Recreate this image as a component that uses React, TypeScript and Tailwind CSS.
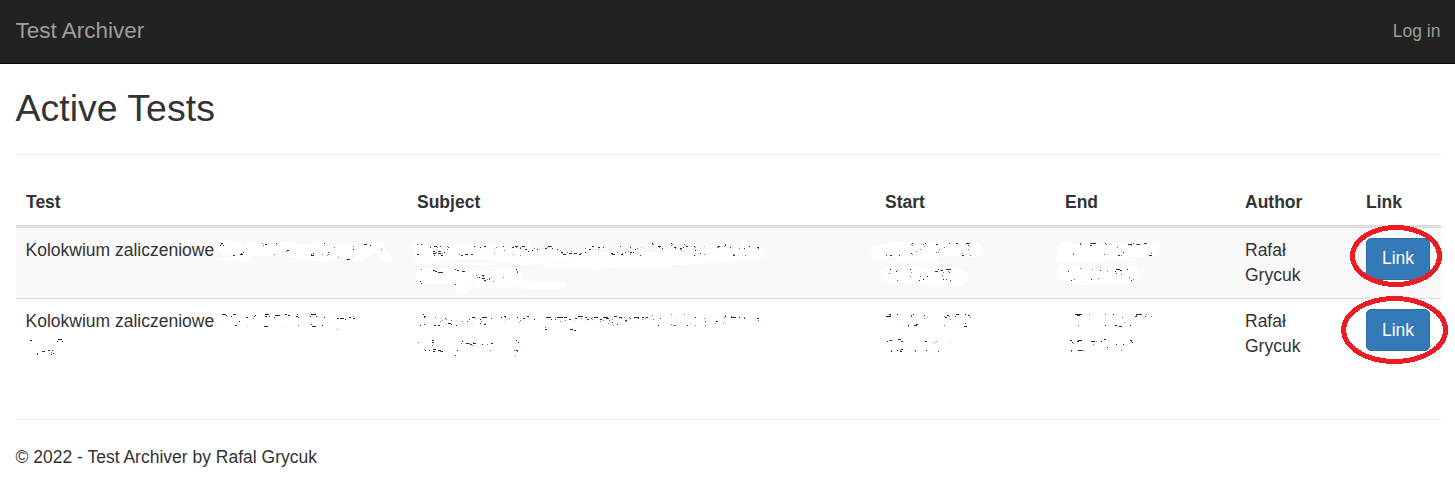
import React from "react";

type Tone = "dark" | "blue" | "amber" | "sky";

const toneClass: Record<Tone, string> = {
  dark: "stroke-[#2b2b30]",
  blue: "stroke-[#3f86bd]",
  amber: "stroke-[#b9752f]",
  sky: "stroke-[#a9daf7]",
};

// Each entry is "x,y,width": the ink left of the rubbed-out words.
const specks: Record<Tone, string> = {
  dark: `
220,245,1 221,243,2 223,245,1 233,255,2 240,254,3 243,252,1 241,253,1 265,244,2 276,243,1 287,250,2 311,254,1 311,255,3 313,253,1 324,243,1 328,252,1 347,259,3 353,249,1 364,244,3 370,245,1
222,314,4 226,315,1 231,316,1 233,314,3 235,325,2 239,321,1 246,317,2 255,315,1 254,316,1 265,314,4 269,316,1 265,316,2 264,326,4 275,315,5 274,317,1 285,314,2 288,315,2 296,316,2 297,314,1 311,314,5 310,316,1 316,316,1 311,324,1 312,326,4 322,325,1 324,317,1 337,318,2 340,318,4 345,319,1 349,317,2 353,318,2
30,340,2 57,341,1 58,339,4 62,341,1 37,353,1 42,351,3 48,350,2 52,350,1 53,353,1 51,354,1
417,254,2 421,244,1 430,247,1 434,246,3 440,246,1 448,247,1 433,251,2 438,251,2 433,253,3 438,253,3 434,255,1 441,255,2 444,252,1 461,255,2 465,254,3 471,254,2 474,246,1 480,247,1 484,246,2 503,246,1 512,247,2 515,246,3 520,248,1 522,246,3 525,249,2 528,251,1 532,250,1 537,249,1 545,248,2 548,246,3 552,248,1 557,249,1 561,252,2 563,254,3 569,253,3 574,253,3 579,254,2 585,252,1 589,249,2 592,246,2 598,247,2 603,247,1 611,253,2 621,254,2 625,252,1 630,252,2 635,249,1
433,270,2 435,271,2 438,272,5 455,269,1 457,270,2 462,271,3 420,281,1 421,283,1 455,284,1 482,275,2 479,277,1 482,278,3 484,280,2 489,278,1 516,269,1 517,272,1
612,254,3 620,246,1 630,247,1 633,252,1 640,255,1 652,243,1 658,246,3 662,248,1 671,243,1 674,247,2 680,248,2 683,247,1 686,246,2 694,246,1 695,250,1 694,255,1 700,253,1 718,246,2 725,245,1 730,247,1 733,255,2 744,248,1 749,246,1 757,247,2
886,255,1 890,255,2 899,255,1 912,243,1 911,253,1 925,243,1 936,244,2 949,243,1 956,243,2 966,243,4 968,245,1 962,255,2
890,269,1 896,271,1 910,269,1 919,280,1 923,279,1 927,276,1 935,271,3 938,269,1 941,270,2 946,269,5 949,272,1 943,279,1 950,280,1
1080,244,1 1091,243,5 1090,245,2 1105,243,1 1118,255,2 1123,252,1 1128,244,4 1133,243,1 1137,244,3 1144,243,3 1149,255,3
1068,271,1 1071,280,1 1091,279,1 1100,270,1 1115,271,1 1116,269,4 1120,270,2 1116,273,1 1127,269,1 1131,280,1
423,314,1 424,316,2 424,317,1 420,325,1 424,324,1 434,325,2 438,325,2 445,318,1 448,323,3 451,324,1 456,325,1 467,321,1 469,319,1 472,317,3 482,317,5 480,319,1 480,323,1 484,324,2 491,318,1 501,317,1 504,316,2 517,317,1 523,318,2 527,316,2 534,319,1 546,317,5 551,319,1 555,319,1 557,317,6 564,317,3 569,319,2 575,318,2 578,316,5 585,317,2 587,319,2 591,318,1 594,317,4 600,319,2 605,317,3 608,318,1 545,329,2 570,329,3 574,330,2
432,340,2 432,342,2 433,349,3 433,351,2 438,350,3 441,351,2 429,350,1 425,350,1 457,350,1 455,355,1 462,341,1 466,343,3 470,344,2 473,343,3 482,344,1 491,343,2 516,340,1 518,342,1 516,350,2
603,317,2 606,318,2 614,316,3 619,317,3 612,322,1 617,324,1 625,320,2 630,318,1 634,317,5 638,318,1 642,317,2 646,317,2 660,318,1 658,325,1 674,325,1 687,325,1 695,317,1 705,321,1 716,321,2 725,316,1 731,317,5 739,317,1 744,318,1 757,318,2
886,316,3 889,314,2 889,316,2 897,314,1 911,316,1 913,314,1 924,315,1 914,325,3 916,324,2 908,325,1 945,317,2 947,315,2 956,314,3 955,316,1 965,314,1 968,315,2 965,323,1 964,326,3
887,341,1 890,340,2 898,339,3 901,341,2 925,341,2 891,351,1 897,350,1 900,351,2 901,349,2 915,350,1 926,350,1 938,351,1
1075,314,7 1077,315,3 1105,325,1 1115,325,2 1119,326,3 1130,325,1 1136,314,6 1135,316,2 1145,316,1 1113,314,1
1070,340,2 1072,342,1 1078,340,4 1077,341,2 1091,341,4 1101,341,1 1104,339,2 1116,344,1 1123,344,1 1130,340,2 1132,342,1 1107,347,1 1078,350,4 1071,350,1`,
  blue: `
263,245,1 286,251,1 322,254,1 328,254,1 338,257,1 353,246,1 298,317,1 298,325,1 253,318,1 37,354,1 51,352,1
447,249,1 436,252,1 440,251,1 459,254,1 496,247,1 504,250,1 516,247,1 534,248,1 551,246,1 560,250,1 567,252,1 580,253,1 617,252,1 630,254,1 637,248,1 421,269,1 477,277,1 487,279,1 489,279,1 517,271,1
653,244,1 671,245,1 675,248,1 684,244,1 681,250,1 695,247,1 717,247,1 724,246,1 733,254,1 758,248,1
912,245,1 916,251,1 923,244,1 936,252,1 939,249,1 944,247,1 970,255,1 889,273,1 897,280,1 910,276,1 942,275,1 946,279,1
1073,253,1 1090,243,1 1104,254,1 1117,247,1 1131,245,1 1151,253,1 1080,268,1 1098,278,1 1121,274,1 1129,277,1
435,317,1 442,320,1 451,320,1 481,321,1 505,317,1 520,320,1 545,327,1 565,320,1 592,319,1 609,320,1 424,349,1 432,345,1 461,343,1 472,345,1 517,351,1 487,344,1
612,319,1 624,317,1 626,320,1 645,318,1 653,319,1 671,324,1 695,325,1 715,323,1 724,317,1 731,316,1 744,317,1 758,320,1
908,326,1 890,315,1 944,325,1 949,316,1 970,317,1 891,350,1 897,350,1 915,351,1 1105,314,1 1078,325,1 1122,317,1 1151,316,1 1071,351,1 1096,341,1 1131,341,1 1083,350,1`,
  amber: `
221,244,1 262,243,1 274,254,1 327,255,1 334,247,1 381,249,1 337,329,1 353,316,1
417,244,1 437,247,1 442,253,1 447,246,1 467,254,1 480,247,1 494,253,1 513,254,1 520,247,1 520,255,1 547,247,1 562,253,1 571,251,1 581,253,1 585,248,1 598,249,1 613,254,1 622,253,1 628,251,1 476,275,1 483,276,1 493,281,1 503,277,1
652,244,1 659,247,1 672,244,1 680,249,1 685,245,1 704,254,1 718,247,1 725,244,1 739,248,1 745,255,1
911,244,1 920,249,1 924,246,1 912,254,1 938,252,1 944,247,1 968,249,1 962,253,1 897,270,1 911,272,1 920,276,1 943,272,1 948,271,1
1073,254,1 1080,243,1 1106,244,1 1121,255,1 1136,244,1 1074,279,1 1092,269,1 1107,271,1 1116,273,1 1133,279,1
440,321,1 446,319,1 449,323,1 462,321,1 475,318,1 485,323,1 509,318,1 519,322,1 524,318,1 555,317,1 560,321,1 581,318,1 592,317,1 600,321,1 418,342,1 440,351,1 469,343,1 473,342,1 482,344,1 490,350,1 514,350,1 515,355,1
603,320,1 608,323,1 613,325,1 621,318,1 626,321,1 629,317,1 642,319,1 652,315,1 671,314,1 675,325,1 684,314,1 704,318,1 705,325,1 723,323,1 725,315,1 739,317,1
887,316,1 890,316,1 911,315,1 924,318,1 944,316,1 950,319,1 889,340,1 900,350,1 936,341,1 934,342,1 1089,314,1 1124,322,1 1130,325,1 1136,315,1 1146,314,1 1073,343,1 1093,344,1 1121,350,1`,
  sky: `
247,325,1 282,326,1 352,256,1 436,249,1 441,251,1 459,254,1 499,254,1 530,246,1 562,252,1 573,254,1 592,249,1 641,247,1 676,247,1 704,246,1 742,254,1 485,281,1 478,274,1 491,277,1 456,320,1 472,324,1 504,321,1 520,321,1 562,321,1 574,320,1 585,322,1 610,318,1 676,317,1 690,323,1 725,322,1 899,250,1 940,269,1 1123,246,1 1107,254,1 927,317,1 950,341,1 1133,318,1 1108,341,1 1082,350,1 440,346,1 487,350,1`,
};

const toPath = (runs: string) =>
  runs
    .trim()
    .split(/\s+/)
    .map((run) => {
      const [x, y, w] = run.split(",").map(Number);
      return `M${x} ${y + 0.5}h${w}`;
    })
    .join("");

const tones: Tone[] = ["sky", "amber", "blue", "dark"];

function RubbedText() {
  return (
    <g fill="none">
      <g stroke="#fff" strokeLinecap="round" strokeLinejoin="round">
        <path strokeWidth="14" d="M225 247l12 3l7 5l7-6h35l12 2l14 1M313 250l7-3l10 5h18l10 2l5-2M421 246l1 12l15-5l50-1l40 6l30-3l50 5l70-2l53-3M880 252l20-3l30 1l30-1l16 1M900 254h33M1064 249l20 4l30-2l39-2" />
        <path strokeWidth="9" d="M318 244l5 14M344 253l15 4M360 250l20-3l3 8l5 3M527 245l-1 5M594 265v1M500 257h60M720 253h40M875 254h10M1061 258h40" />
        <path strokeWidth="15" d="M422 276l30 0l30 3l32-3M463 283v4M888 274l27 0l35 4l11 0M1064 273l35 3l33-2" />
        <path strokeWidth="7" d="M480 285l35-3l18 3h29M745 243v8" />
        <path strokeWidth="2" strokeDasharray="0 3" d="M425 263l35 1l35 0M540 263l60 5l60-3l45-3M542 266l60 -1l45 0M890 262h50M930 286h20M500 288h60M1075 284h45M220 259h20M310 260h40" />
      </g>
      <g shapeRendering="crispEdges" strokeWidth="1">
        {tones.map((tone) => (
          <path key={tone} className={toneClass[tone]} d={toPath(specks[tone])} />
        ))}
      </g>
    </g>
  );
}

function Markup() {
  return (
    <svg
      className="pointer-events-none absolute left-0 top-0"
      width="1455"
      height="490"
      viewBox="0 0 1455 490"
      aria-hidden="true"
    >
      <RubbedText />
      <g fill="none" stroke="#ed1c24" strokeWidth="5" shapeRendering="crispEdges">
        <ellipse cx="1396" cy="256" rx="43.5" ry="28.5" />
        <ellipse cx="1394.6" cy="330" rx="51" ry="31.5" />
      </g>
    </svg>
  );
}

const columns = [
  { label: "Test", width: "w-[391px]" },
  { label: "Subject", width: "w-[468px]" },
  { label: "Start", width: "w-[180px]" },
  { label: "End", width: "w-[180px]" },
  { label: "Author", width: "w-[121px]" },
  { label: "Link", width: "w-[85px]" },
];

type TestRowProps = { rowClass: string; textClass: string; linkClass: string; buttonClass: string };

function TestRow({ rowClass, textClass, linkClass, buttonClass }: TestRowProps) {
  return (
    <tr className={`align-top ${rowClass}`}>
      <td className={`pl-[9.5px] ${textClass}`}>Kolokwium zaliczeniowe</td>
      <td />
      <td />
      <td />
      <td className={`px-2.5 ${textClass}`}>
        Rafał
        <br />
        Grycuk
      </td>
      <td className={`px-2.5 ${linkClass}`}>
        <button
          className={`block h-[42px] w-16 rounded-[5px] border border-[#2e6da4] bg-[#337ab7] text-center text-white ${buttonClass}`}
        >
          Link
        </button>
      </td>
    </tr>
  );
}

export default function App() {
  return (
    <div className="relative h-[490px] w-[1455px] overflow-hidden bg-white font-['Liberation_Sans',Arial,sans-serif] text-[17.5px] leading-[25px] text-[#333]">
      <nav className="flex h-16 items-center justify-between border-b border-[#080808] bg-[#222] pl-[15.5px] pr-[14.5px] text-[#9d9d9d]">
        <a className="pb-0.5 text-[22.5px]">Test Archiver</a>
        <a>Log in</a>
      </nav>
      <main className="px-4 pr-[14px]">
        <h2 className="-ml-[0.5px] pt-6 text-[37.5px] leading-[41px]">Active Tests</h2>
        <hr className="mt-[25px] border-[#eee]" />
        <table className="mt-[25px] w-[1425px] table-fixed border-collapse">
          <thead>
            <tr className="h-[45px] text-left align-top">
              {columns.map((column) => (
                <th key={column.label} className={`${column.width} px-2.5 pt-2.5 font-bold`}>
                  {column.label}
                </th>
              ))}
            </tr>
          </thead>
          <tbody>
            <tr>
              <td colSpan={6} className="h-[3px] bg-[#ddd] p-0" />
            </tr>
            <TestRow
              rowClass="h-[70px] bg-[#f9f9f9]"
              textClass="pt-2.5"
              linkClass="pt-2.5"
              buttonClass="pb-0.5"
            />
            <TestRow
              rowClass="h-[72px] shadow-[inset_0_1px_0_#ddd]"
              textClass="pt-[11px]"
              linkClass="pt-[11px]"
              buttonClass=""
            />
          </tbody>
        </table>
        <hr className="mt-[49px] border-[#eee]" />
        <footer className="-ml-[0.5px] pt-[25px]">
          <p>© 2022 - Test Archiver by Rafal Grycuk</p>
        </footer>
      </main>
      <Markup />
    </div>
  );
}
